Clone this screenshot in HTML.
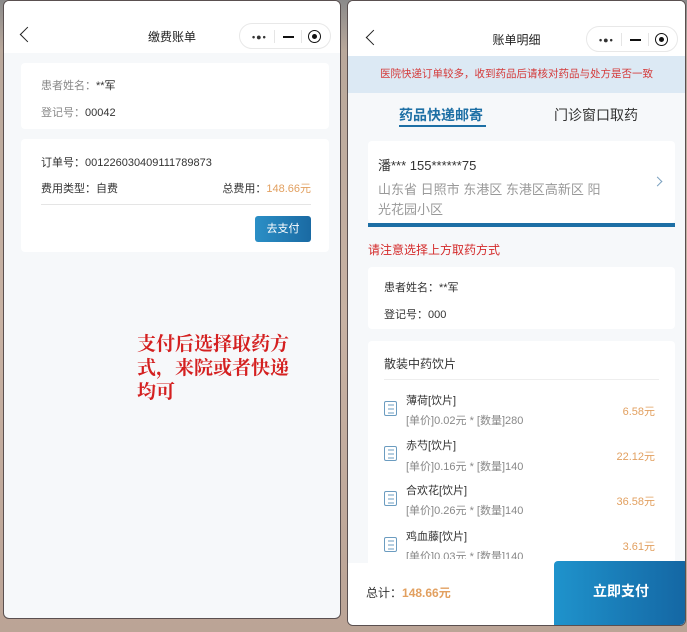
<!DOCTYPE html><html><head><meta charset="utf-8"><style>
*{margin:0;padding:0;box-sizing:border-box}
body{width:687px;height:632px;background:linear-gradient(#8a8a8a 0,#b9a89b 8%,#c8b2a3 50%,#bba496 100%);position:relative;overflow:hidden;font-family:"Liberation Sans","Noto Sans CJK SC",sans-serif;color:#333}
.ph{position:absolute;background:#f6f8fa;border:1px solid #5a5050;border-radius:6px;overflow:hidden}
.nav{height:52px;background:#fff;position:relative}
.back{position:absolute;left:18px;top:28px;width:11px;height:11px;border-left:1.6px solid #222;border-bottom:1.6px solid #222;transform:rotate(45deg)}
.title{position:absolute;width:100%;top:27px;text-align:center;font-size:12px;color:#222}
.cap{position:absolute;top:22px;width:92px;height:26px;border:1px solid #e8e8e8;border-radius:13px;background:#fff}
.cap .d{position:absolute;left:12px;top:11px;font-size:9px;letter-spacing:1px;font-weight:bold;line-height:4px}
.cap .m{position:absolute;left:43px;top:12px;width:11px;height:2px;background:#111}
.cap .s{position:absolute;top:6px;width:1px;height:13px;background:#e5e5e5}
.cap .o{position:absolute;left:68px;top:6px;width:13px;height:13px;border:1.6px solid #111;border-radius:50%}
.cap .o:after{content:"";position:absolute;left:2.5px;top:2.5px;width:5px;height:5px;background:#111;border-radius:50%}
.card{position:absolute;background:#fff;border-radius:4px}
.t{position:absolute;font-size:11px;white-space:nowrap}
.g{color:#888}
.or{color:#e2a060}
.ic{width:13px;height:15px;border:1.5px solid #6b9cc0;border-radius:2px;background:repeating-linear-gradient(#fff 0 2px,#6b9cc0 2px 3px,#fff 3px 4px);background-clip:content-box;padding:1.5px 2.5px}
</style></head><body>
<div class="ph" style="left:3px;top:0;width:338px;height:619px">
<div class="nav"><div class="back"></div><div class="title">缴费账单</div>
<div class="cap" style="left:235px"><span class="d">•●•</span><span class="s" style="left:34px"></span><span class="m"></span><span class="s" style="left:61px"></span><span class="o"></span></div></div>
<div class="card" style="left:17px;top:62px;width:308px;height:66px">
<div class="t g" style="left:20px;top:14px">患者姓名：<span style="color:#333">**军</span></div>
<div class="t g" style="left:20px;top:41px">登记号：<span style="color:#333">00042</span></div></div>
<div class="card" style="left:17px;top:138px;width:308px;height:113px">
<div class="t" style="left:20px;top:15px">订单号：001226030409111789873</div>
<div class="t" style="left:20px;top:41px">费用类型：自费</div>
<div class="t" style="right:18px;top:41px">总费用：<span class="or">148.66元</span></div>
<div style="position:absolute;left:20px;right:18px;top:65px;height:1px;background:#e5e5e5"></div>
<div style="position:absolute;right:18px;top:77px;width:56px;height:26px;border-radius:3px;background:linear-gradient(90deg,#2b8fc6,#1a6aa3);color:#fff;font-size:11px;text-align:center;line-height:26px">去支付</div></div>
<div style="position:absolute;left:133px;top:330px;font-size:19px;line-height:24px;color:#d42020;font-weight:bold;font-family:'Noto Serif CJK SC',serif;width:165px">支付后选择取药方式，来院或者快递均可</div>
</div>
<div class="ph" style="left:347px;top:0;width:339px;height:626px">
<div class="nav" style="height:55px"><div class="back" style="left:20px;top:31px"></div><div class="title" style="top:30px">账单明细</div>
<div class="cap" style="left:238px;top:25px"><span class="d">•●•</span><span class="s" style="left:34px"></span><span class="m"></span><span class="s" style="left:61px"></span><span class="o"></span></div></div>
<div style="position:absolute;left:0;top:55px;width:100%;height:37px;background:#dce9f4;color:#d43a3a;font-size:10.5px;text-align:center;line-height:37px">医院快递订单较多，收到药品后请核对药品与处方是否一致</div>
<div class="t" style="left:51px;top:104px;font-size:14px;color:#1d6fa5;font-weight:bold">药品快递邮寄</div>
<div style="position:absolute;left:51px;top:124px;width:87px;height:2px;background:#1d6fa5"></div>
<div class="t" style="left:206px;top:104px;font-size:14px">门诊窗口取药</div>
<div class="card" style="left:20px;top:140px;width:307px;height:82px">
<div class="t" style="left:10px;top:14px;font-size:13px">潘*** 155******75</div>
<div class="t" style="left:10px;top:38px;font-size:13px;color:#999">山东省 日照市 东港区 东港区高新区 阳</div>
<div class="t" style="left:10px;top:58px;font-size:13px;color:#999">光花园小区</div>
<div style="position:absolute;right:14px;top:37px;width:7px;height:7px;border-right:1.5px solid #7ca1c0;border-top:1.5px solid #7ca1c0;transform:rotate(45deg)"></div></div>
<div style="position:absolute;left:20px;top:222px;width:307px;height:4px;background:#1d6fa5"></div>
<div class="t" style="left:20px;top:240px;font-size:12px;color:#d42a2a">请注意选择上方取药方式</div>
<div class="card" style="left:20px;top:266px;width:307px;height:62px">
<div class="t" style="left:16px;top:12px">患者姓名：**军</div>
<div class="t" style="left:16px;top:39px">登记号：000</div></div>
<div class="card" style="left:20px;top:340px;width:307px;height:230px">
<div class="t" style="left:16px;top:14px;font-size:12px">散装中药饮片</div>
<div style="position:absolute;left:16px;right:16px;top:38px;height:1px;background:#eee"></div></div>
<div style="position:absolute;left:0;bottom:0;width:100%;height:62px;background:#fff"></div>
<div class="t" style="left:18px;top:583px;font-size:12px">总计：<span class="or" style="font-weight:bold">148.66元</span></div>
<div style="position:absolute;left:206px;top:560px;width:134px;height:66px;border-radius:4px 4px 0 0;background:linear-gradient(90deg,#1f93cc,#1466a3);color:#fff;font-size:14px;font-weight:bold;text-align:center;line-height:60px">立即支付</div>
</div>
<div class="ic" style="position:absolute;left:384px;top:401px"></div>
<div class="t" style="left:406px;top:392px">薄荷[饮片]</div><div class="t g" style="left:406px;top:412px">[单价]0.02元 * [数量]280</div><div class="t or" style="right:32px;top:403px">6.58元</div>
<div class="ic" style="position:absolute;left:384px;top:446px"></div>
<div class="t" style="left:406px;top:437px">赤芍[饮片]</div><div class="t g" style="left:406px;top:458px">[单价]0.16元 * [数量]140</div><div class="t or" style="right:32px;top:448px">22.12元</div>
<div class="ic" style="position:absolute;left:384px;top:491px"></div>
<div class="t" style="left:406px;top:482px">合欢花[饮片]</div><div class="t g" style="left:406px;top:502px">[单价]0.26元 * [数量]140</div><div class="t or" style="right:32px;top:493px">36.58元</div>
<div class="ic" style="position:absolute;left:384px;top:537px"></div>
<div class="t" style="left:406px;top:528px">鸡血藤[饮片]</div><div class="t g" style="left:406px;top:548px;height:11px;overflow:hidden">[单价]0.03元 * [数量]140</div><div class="t or" style="right:32px;top:538px">3.61元</div>
</body></html>
